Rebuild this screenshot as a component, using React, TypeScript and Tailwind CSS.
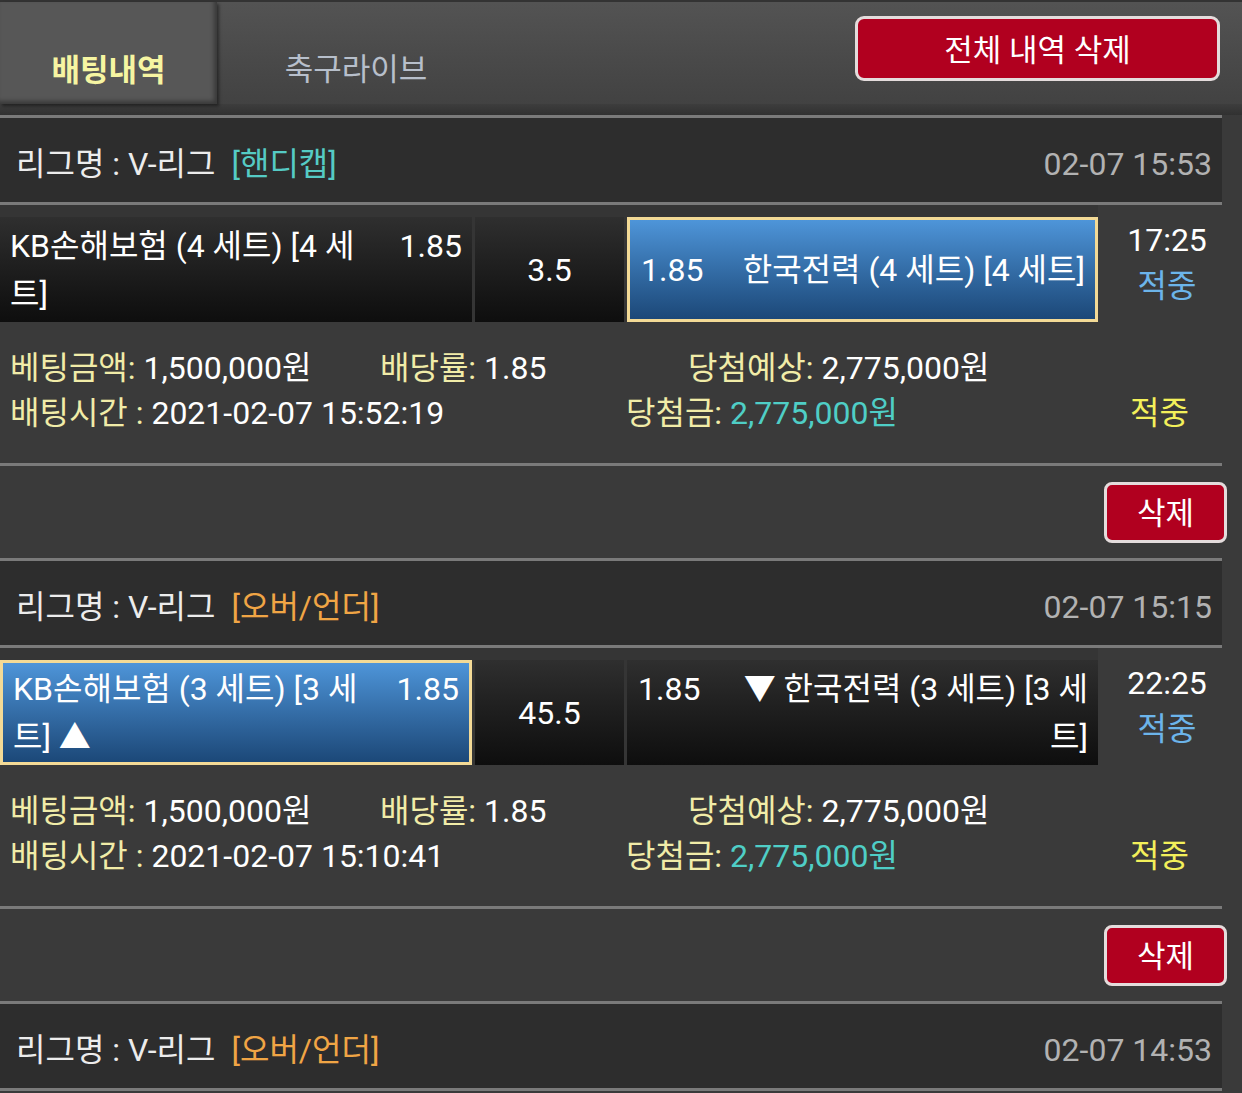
type Bet = {
  type: string
  typeColor: string
  date: string
  home: string
  homeOdds: string
  line: string
  away: string
  awayOdds: string
  pick: 'home' | 'away'
  time: string
  amount: string
  rate: string
  expect: string
  betTime: string
  win: string
}

const bets: Bet[] = [
  {
    type: '[핸디캡]',
    typeColor: 'text-[#55cbc5]',
    date: '02-07 15:53',
    home: 'KB손해보험 (4 세트) [4 세트]',
    homeOdds: '1.85',
    line: '3.5',
    away: '한국전력 (4 세트) [4 세트]',
    awayOdds: '1.85',
    pick: 'away',
    time: '17:25',
    amount: '1,500,000원',
    rate: '1.85',
    expect: '2,775,000원',
    betTime: '2021-02-07 15:52:19',
    win: '2,775,000원',
  },
  {
    type: '[오버/언더]',
    typeColor: 'text-[#f0a545]',
    date: '02-07 15:15',
    home: 'KB손해보험 (3 세트) [3 세트] ▲',
    homeOdds: '1.85',
    line: '45.5',
    away: '▼ 한국전력 (3 세트) [3 세트]',
    awayOdds: '1.85',
    pick: 'home',
    time: '22:25',
    amount: '1,500,000원',
    rate: '1.85',
    expect: '2,775,000원',
    betTime: '2021-02-07 15:10:41',
    win: '2,775,000원',
  },
]

const cellDark = 'bg-gradient-to-b from-[#2f2f2f] to-[#0e0e0e]'
const cellPicked = 'bg-gradient-to-b from-[#4e95d9] to-[#1c4878] border-[3px] border-[#f3da96]'

function Line() {
  return <div className="h-[3px] w-[1222px] bg-[#7a7a7a]" />
}

function LeagueHeader({ type, typeColor, date }: { type: string; typeColor: string; date: string }) {
  return (
    <div className="h-[84px] w-[1222px] bg-[#2d2d2d] flex items-center justify-between pl-[16px] pr-[10px] pt-[7px]">
      <div className="text-[#ececec]">
        리그명 : V-리그<span className={`ml-[16px] ${typeColor}`}>{type}</span>
      </div>
      <div className="text-[#b2b2b2]">{date}</div>
    </div>
  )
}

function BetCard({ bet }: { bet: Bet }) {
  const homePicked = bet.pick === 'home'
  const awayPicked = bet.pick === 'away'
  return (
    <div>
      <Line />
      <LeagueHeader type={bet.type} typeColor={bet.typeColor} date={bet.date} />
      <Line />

      <div className="pt-[12px] flex w-[1222px] bg-[#353535]">
        <div className="flex gap-[3px] h-[105px]">
          <div className={`w-[472px] flex items-center pl-[10px] pr-[10px] ${homePicked ? cellPicked : cellDark}`}>
            <div className="flex items-start justify-between w-full leading-[48px]">
              <span className="w-[372px] break-all text-white">{bet.home}</span>
              <span className="text-white">{bet.homeOdds}</span>
            </div>
          </div>
          <div className={`w-[149px] flex items-center justify-center text-white ${cellDark}`}>{bet.line}</div>
          <div className={`w-[471px] flex items-center pl-[11px] pr-[10px] ${awayPicked ? cellPicked : cellDark}`}>
            <div className="flex items-start justify-between w-full leading-[48px]">
              <span className="text-white">{bet.awayOdds}</span>
              <span className="w-[345px] break-all text-right text-white">{bet.away}</span>
            </div>
          </div>
        </div>
        <div className="flex-1 flex flex-col items-center leading-[46px] bg-[#3a3a3a] -mt-[12px] pt-[12px] -mr-[14px]">
          <span className="text-white">{bet.time}</span>
          <span className="text-[#6cb4ea]">적중</span>
        </div>
      </div>

      <div className="h-[141px] pt-[24px] pl-[10px] leading-[45px]">
        <div className="flex">
          <span className="w-[370px]">
            <span className="text-[#f1eca8]">베팅금액: </span>
            <span className="text-white">{bet.amount}</span>
          </span>
          <span className="w-[308px]">
            <span className="text-[#f1eca8]">배당률: </span>
            <span className="text-white">{bet.rate}</span>
          </span>
          <span>
            <span className="text-[#f1eca8]">당첨예상: </span>
            <span className="text-white">{bet.expect}</span>
          </span>
        </div>
        <div className="flex">
          <span className="w-[616px]">
            <span className="text-[#f1eca8]">배팅시간 : </span>
            <span className="text-white">{bet.betTime}</span>
          </span>
          <span className="w-[504px]">
            <span className="text-[#f1eca8]">당첨금: </span>
            <span className="text-[#4fcec6]">{bet.win}</span>
          </span>
          <span className="text-[#f3f05a]">적중</span>
        </div>
      </div>

      <Line />
      <div className="h-[92px] flex items-center justify-end pr-[15px]">
        <button className="w-[123px] h-[61px] rounded-[8px] border-[3px] border-[#e4dcdc] bg-[#b1001f] text-white text-[31px] leading-none pt-[2px]">
          삭제
        </button>
      </div>
    </div>
  )
}

export default function App() {
  return (
    <div className="w-[1242px] min-h-[1093px] bg-[#3a3a3a] text-[32px] [font-family:Roboto,'Noto_Sans_CJK_KR',sans-serif] overflow-hidden">
      <div className="h-[104px] flex items-start bg-gradient-to-b from-[#535353] to-[#424242] border-t-2 border-[#333]">
        <div className="w-[217px] h-[102px] bg-[#575757] shadow-[inset_-3px_-3px_4px_rgba(0,0,0,0.35),2px_2px_3px_rgba(0,0,0,0.45)] flex items-center justify-center pt-[36px]">
          <span className="text-[31px] font-bold text-[#f6f5a2]">배팅내역</span>
        </div>
        <div className="w-[278px] h-[102px] flex items-center justify-center pt-[34px]">
          <span className="text-[31px] text-[#b7bfcb]">축구라이브</span>
        </div>
        <div className="flex-1 flex justify-end pr-[22px] pt-[14px]">
          <button className="w-[365px] h-[65px] rounded-[9px] border-[3px] border-[#e4dcdc] bg-[#b1001f] text-white text-[31px] leading-none pt-[3px]">
            전체 내역 삭제
          </button>
        </div>
      </div>
      <div className="h-[11px] bg-gradient-to-b from-[#3d3d3d] to-[#313131]" />

      {bets.map((bet, i) => (
        <BetCard key={i} bet={bet} />
      ))}

      <Line />
      <LeagueHeader type="[오버/언더]" typeColor="text-[#f0a545]" date="02-07 14:53" />
      <Line />
    </div>
  )
}
